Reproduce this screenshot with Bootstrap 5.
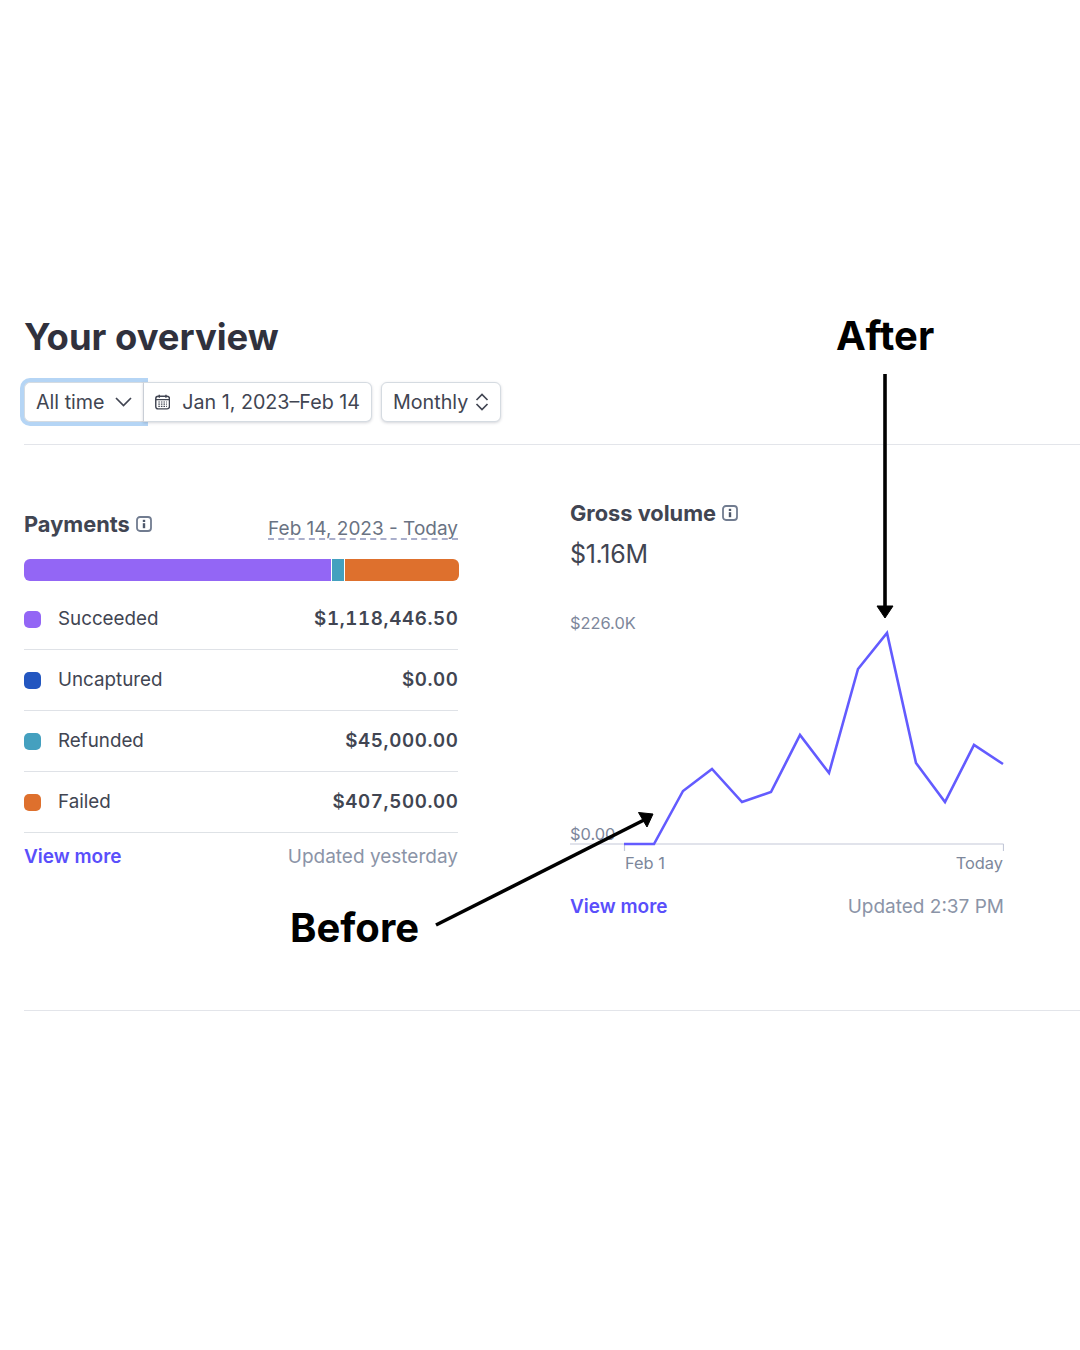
<!DOCTYPE html>
<html lang="en">
<head>
    <meta charset="UTF-8">
    <meta name="viewport" content="width=device-width, initial-scale=1.0">
    <title>Your overview</title>
    <link href="https://cdn.jsdelivr.net/npm/bootstrap@5.3.0/dist/css/bootstrap.min.css" rel="stylesheet">
    <style>
        body { font-family: Inter, "Liberation Sans", sans-serif; color: #414552; background: #fff; width: 1080px; height: 1350px; overflow: hidden; }
        .page-wrap { padding: 311px 0 0 24px; }
        .page-title { font-size: 36.4px; line-height: 52px; font-weight: 700; color: #30313d; margin: 0 0 19px 0; }
        .tool-row { height: 40px; margin-bottom: 22px; }
        .tool-btn { font-size: 19.7px; line-height: 24px; color: #414552; background: #fff; border: 1px solid #d5dbe1; box-shadow: 0 1px 3px rgba(60,66,87,.22); border-radius: 6px; padding: 0 11px; display: flex; align-items: center; height: 40px; white-space: nowrap; }
        .tool-btn:hover { background: #fff; color: #414552; border-color: #d5dbe1; }
        .btn-time { width: 120px; justify-content: space-between; border-radius: 6px 0 0 6px; box-shadow: 0 0 0 4px #b5d5f5; position: relative; z-index: 1; border-right: 0; padding-right: 12px; }
        .btn-date { width: 229px; gap: 12px; border-radius: 0 6px 6px 0; position: relative; z-index: 2; border-left: 1px solid #c9ced6; }
        .btn-period { width: 120px; justify-content: space-between; margin-left: 1px; }
        .ov-rule { border-bottom: 1px solid #e3e5ea; }
        .ov-main { height: 566px; }
        .pay-col { width: 434px; padding-top: 64px; }
        .vol-col { width: 434px; margin-left: 112px; padding-top: 53px; }
        .sec-title { font-size: 21.8px; line-height: 30px; font-weight: 700; color: #414552; gap: 6px; }
        .pay-range { font-size: 19px; line-height: 24px; color: #6a7383; border-bottom: 2px dashed #a9aecb; margin-top: 8px; height: 23px; }
        .pay-bar { height: 22px; border-radius: 6px; margin-top: 19px; margin-right: -1px; gap: 1px; background: #fff; }
        .bar-purple { background: #9366f5; }
        .bar-teal { background: #44a0bf; }
        .bar-orange { background: #de702d; }
        .bar-blue { background: #2356c0; }
        .pay-list { margin-top: 8px; }
        .pay-row { height: 61px; padding: 0 0 0; border-color: #dfe2e7; font-size: 18.8px; color: #414552; }
        .pay-swatch { width: 17px; height: 17px; border-radius: 5px; margin-right: 17px; }
        .pay-amount { font-weight: 600; letter-spacing: .6px; margin-right: -.6px; font-variant-numeric: tabular-nums; }
        .foot-row { font-size: 19px; line-height: 24px; margin-top: 12px; }
        .foot-link { color: #5a4ffb; font-weight: 600; text-decoration: none; }
        .foot-note { color: #8b94a7; }
        .vol-total { font-size: 25px; line-height: 30px; color: #414552; margin-top: 11px; letter-spacing: -.3px; }
        .vol-chart { display: block; width: 434px; height: 265px; margin-top: 41px; }
        .vol-chart text { font-family: Inter, "Liberation Sans", sans-serif; font-size: 16.4px; fill: #7d879b; }
        .vol-foot { margin-top: 20px; }
        .note-label { position: absolute; font-size: 40px; line-height: 48px; font-weight: 700; color: #000; z-index: 5; }
        .note-after { left: 836px; top: 312px; }
        .note-before { left: 290px; top: 904px; }
        .note-arrows { position: absolute; left: 0; top: 0; z-index: 4; pointer-events: none; }
    </style>
</head>
<body>
    <svg width="0" height="0" class="d-block">
        <symbol id="info-icon" viewBox="0 0 16 16">
            <rect x="1" y="1" width="14" height="14" rx="3" fill="none" stroke="#717c90" stroke-width="1.8"/>
            <rect x="6.8" y="3.8" width="2.4" height="2.2" fill="#4f596c"/>
            <rect x="6.8" y="7.2" width="2.4" height="5" fill="#4f596c"/>
        </symbol>
    </svg>

    <div class="page-wrap">
        <h1 class="page-title">Your overview</h1>

        <div class="d-flex gap-2 tool-row">
            <div class="btn-group">
                <button type="button" class="btn tool-btn btn-time">All time
                    <svg width="17" height="10" viewBox="0 0 17 10"><path d="M1 1l7.5 7.5L16 1" fill="none" stroke="#414552" stroke-width="1.7"/></svg>
                </button>
                <button type="button" class="btn tool-btn btn-date">
                    <svg width="16" height="16" viewBox="0 0 16 16">
                        <rect x=".8" y="2" width="14.4" height="13.2" rx="2.5" fill="none" stroke="#414552" stroke-width="1.5"/>
                        <path d="M1 5.5h14M4.5 .5v3M11.5 .5v3" stroke="#414552" stroke-width="1.5"/>
                        <path d="M3.5 8h9M3.5 10.3h9M3.5 12.6h9" stroke="#414552" stroke-width="1.3" stroke-dasharray="1.6 1.1"/>
                    </svg>
                    Jan 1, 2023–Feb 14
                </button>
            </div>
            <button type="button" class="btn tool-btn btn-period">
                Monthly
                <svg width="14" height="18" viewBox="0 0 14 18"><path d="M1.5 7L7 1.5 12.5 7M1.5 11L7 16.5 12.5 11" fill="none" stroke="#414552" stroke-width="1.7"/></svg>
            </button>
        </div>
        <div class="ov-rule"></div>

        <div class="d-flex ov-main ov-rule">
            <section class="pay-col">
                <div class="d-flex justify-content-between align-items-start">
                    <div class="d-flex align-items-center sec-title">Payments
                        <svg width="16" height="16"><use href="#info-icon"/></svg>
                    </div>
                    <div class="pay-range">Feb 14, 2023 - Today</div>
                </div>
                <div class="progress pay-bar">
                    <div class="progress-bar bar-purple" style="width: 70.5%"></div>
                    <div class="progress-bar bar-teal" style="width: 2.9%"></div>
                    <div class="progress-bar bar-orange" style="width: 26.2%"></div>
                </div>
                <ul class="list-group list-group-flush pay-list">
                    <li class="list-group-item d-flex align-items-center pay-row"><span class="pay-swatch bar-purple"></span>Succeeded<span class="pay-amount ms-auto">$1,118,446.50</span></li>
                    <li class="list-group-item d-flex align-items-center pay-row"><span class="pay-swatch bar-blue"></span>Uncaptured<span class="pay-amount ms-auto">$0.00</span></li>
                    <li class="list-group-item d-flex align-items-center pay-row"><span class="pay-swatch bar-teal"></span>Refunded<span class="pay-amount ms-auto">$45,000.00</span></li>
                    <li class="list-group-item d-flex align-items-center pay-row border-bottom"><span class="pay-swatch bar-orange"></span>Failed<span class="pay-amount ms-auto">$407,500.00</span></li>
                </ul>
                <div class="d-flex justify-content-between foot-row">
                    <a href="#" class="foot-link">View more</a>
                    <span class="foot-note">Updated yesterday</span>
                </div>
            </section>

            <section class="vol-col">
                <div class="d-flex align-items-center sec-title">Gross volume
                    <svg width="16" height="16"><use href="#info-icon"/></svg>
                </div>
                <div class="vol-total">$1.16M</div>
                <svg class="vol-chart" viewBox="570 610 434 265">
                    <text x="570" y="629">$226.0K</text>
                    <text x="570" y="840">$0.00</text>
                    <path d="M570 844H1003.5M624.5 844v7M1003.5 844v7" fill="none" stroke="#c3c8d8" stroke-width="1.2"/>
                    <polyline points="624,844 654,844 683,791 712,769 742,802 771,792 800,735 829,773 858,669 887,633 916,763 945,802 974,745 1003,764" fill="none" stroke="#635bff" stroke-width="2.6"/>
                    <text x="625" y="869">Feb 1</text>
                    <text x="1003" y="869" text-anchor="end">Today</text>
                </svg>
                <div class="d-flex justify-content-between foot-row vol-foot">
                    <a href="#" class="foot-link">View more</a>
                    <span class="foot-note">Updated 2:37 PM</span>
                </div>
            </section>
        </div>
    </div>

    <div class="note-label note-after">After</div>
    <div class="note-label note-before">Before</div>
    <svg class="note-arrows" width="1080" height="1350" viewBox="0 0 1080 1350">
        <path d="M885 374V608" stroke="#000" stroke-width="3.6"/>
        <path d="M877 606h16l-8 12z" fill="#000" stroke="#000" stroke-linejoin="round"/>
        <path d="M436 925L644 820" stroke="#000" stroke-width="3.6"/>
        <path d="M638.5 812.5L653 814l-6 13z" fill="#000" stroke="#000" stroke-linejoin="round"/>
    </svg>

    <script src="https://cdn.jsdelivr.net/npm/bootstrap@5.3.0/dist/js/bootstrap.bundle.min.js"></script>
</body>
</html>
